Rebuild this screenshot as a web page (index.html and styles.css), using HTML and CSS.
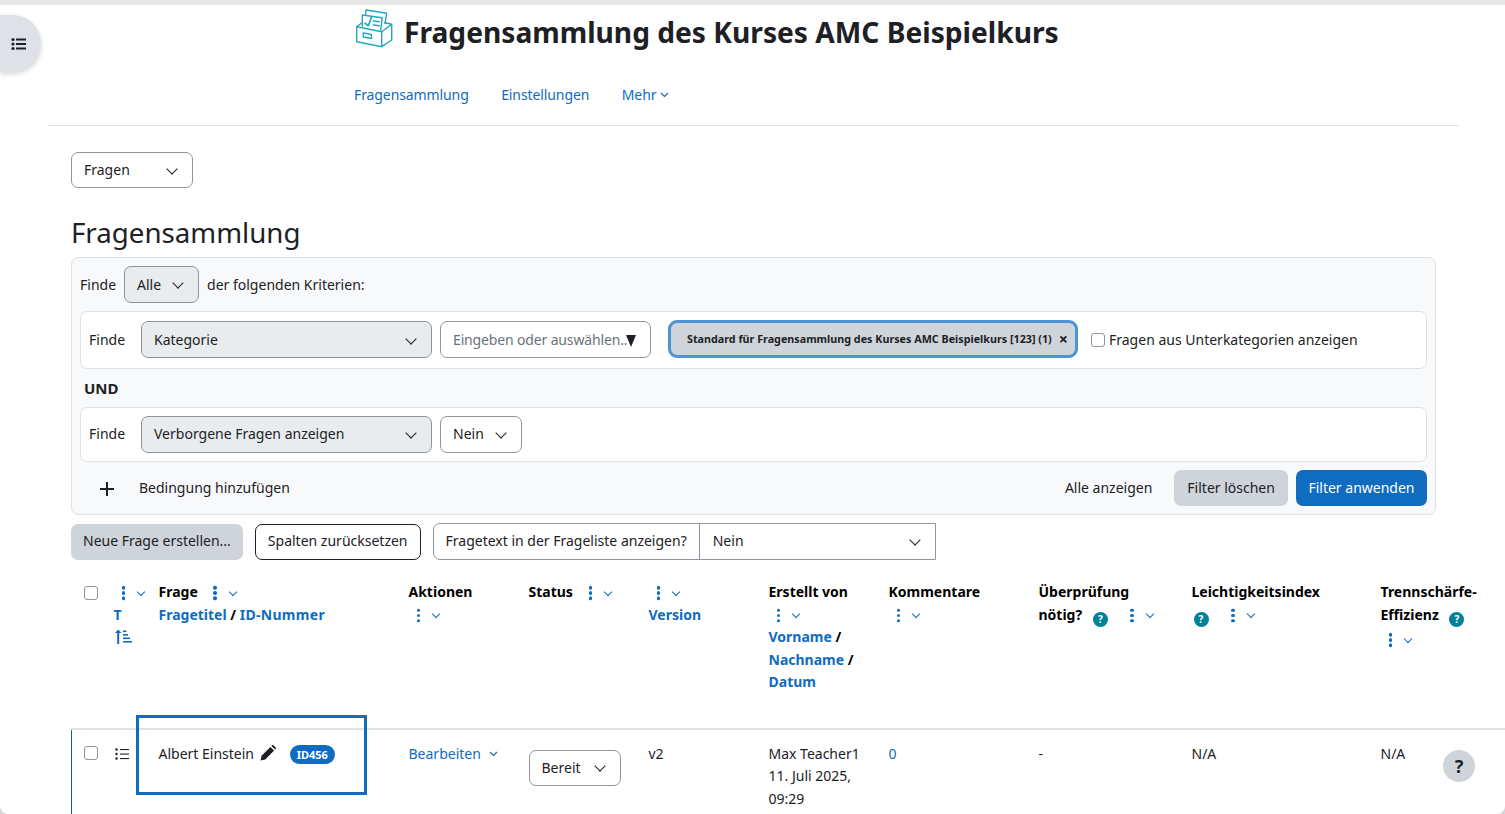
FILE: index.html
```html
<!DOCTYPE html>
<html lang="de">
<head>
<meta charset="utf-8">
<title>Fragensammlung</title>
<link rel="stylesheet" href="styles.css">
</head>
<body>
<button class="drawer-toggle" aria-label="Index">
  <svg width="16" height="14" viewBox="0 0 16 14"><g fill="#1d2125"><circle cx="2" cy="2.5" r="1.6"/><circle cx="2" cy="7" r="1.6"/><circle cx="2" cy="11.5" r="1.6"/><rect x="5" y="1.5" width="10" height="2"/><rect x="5" y="6" width="10" height="2"/><rect x="5" y="10.5" width="10" height="2"/></g></svg>
</button>
<header class="page-head">
  <div class="title-row">
    <svg class="title-icon" width="37" height="40" viewBox="0 0 37 40" fill="none" stroke="#22a8b8" stroke-width="1.4" stroke-linejoin="round" stroke-linecap="round">
      <path d="M9.7 5.5 L10 1 L30.7 4.3 L29 14.3"/>
      <path d="M6.3 17 V6 L26.3 8.7 L24.7 21"/>
      <path d="M9 14.3 L12.3 16.7 L15.7 7.7" stroke-width="1.7"/>
      <path d="M17.3 12 L23.3 12.7 M17.3 16 L23.3 16.7"/>
      <path d="M6.3 13.5 L0.7 17.7 L25.7 22.7 L35.7 15.3 L29 13.8 M0.7 17.7 V32.7 L25.7 37.7 L35.7 31 V15.3 M25.7 22.7 V37.7"/>
      <path d="M7.3 24 L15.5 25.5 V29.5 L7.3 28 Z"/>
    </svg>
    <h1>Fragensammlung des Kurses AMC Beispielkurs</h1>
  </div>
  <nav class="tabs">
    <a href="#">Fragensammlung</a>
    <a href="#">Einstellungen</a>
    <a href="#">Mehr <svg class="chev-s" width="9" height="6" viewBox="0 0 9 6"><path d="M1 1 L4.5 4.5 L8 1" fill="none" stroke="currentColor" stroke-width="1.2"/></svg></a>
  </nav>
</header>
<hr class="rule">
<main class="content">
  <div class="select plain w-fragen">Fragen <span class="caret"></span></div>
  <h2>Fragensammlung</h2>
  <section class="filter">
    <div class="filter-top">
      <span class="nudge">Finde</span>
      <div class="select grey w-alle">Alle <span class="caret"></span></div>
      <span class="nudge">der folgenden Kriterien:</span>
    </div>
    <div class="cond c1">
      <span class="finde">Finde</span>
      <div class="select grey w-cond">Kategorie <span class="caret"></span></div>
      <div class="select plain w-input"><span class="ph">Eingeben oder auswählen..</span><span class="tri"></span></div>
      <div class="tag"><span>Standard für Fragensammlung des Kurses AMC Beispielkurs [123] (1)</span><b>×</b></div>
      <span class="box"></span><span class="sub">Fragen aus Unterkategorien anzeigen</span>
    </div>
    <div class="und">UND</div>
    <div class="cond c2">
      <span class="finde">Finde</span>
      <div class="select grey w-cond">Verborgene Fragen anzeigen <span class="caret"></span></div>
      <div class="select plain w-nein">Nein <span class="caret"></span></div>
    </div>
    <div class="filter-foot">
      <span class="plus"></span>
      <span class="add nudge">Bedingung hinzufügen</span>
      <span class="all nudge">Alle anzeigen</span>
      <button class="btn grey-btn nudge-btn">Filter löschen</button>
      <button class="btn blue-btn nudge-btn">Filter anwenden</button>
    </div>
  </section>
  <div class="actions">
    <button class="btn grey-btn neue">Neue Frage erstellen...</button>
    <button class="btn outline">Spalten zurücksetzen</button>
    <div class="joined"><span class="lbl">Fragetext in der Frageliste anzeigen?</span><div class="val">Nein <span class="caret"></span></div></div>
  </div>
  <div class="table-wrap">
    <table>
      <colgroup>
        <col class="c-a"><col class="c-b"><col class="c-c"><col class="c-d"><col class="c-d"><col class="c-d"><col class="c-d"><col class="c-e"><col class="c-f"><col class="c-g"><col class="c-h">
      </colgroup>
      <thead>
        <tr>
          <th><span class="box"></span></th>
          <th class="icons"><span class="menu"><i class="dots"></i><i class="chev"></i></span><br><a href="#">T</a><br>
            <a href="#"><svg class="sort" width="18" height="15" viewBox="0 0 18 15" fill="currentColor"><path d="M3.2 15 V4 H1 L4.2 0.5 L7.4 4 H5.2 V15 Z"/><rect x="9" y="1.5" width="3.5" height="1.6"/><rect x="9" y="5" width="5" height="1.6"/><rect x="9" y="8.5" width="7" height="1.6"/><rect x="9" y="12" width="9" height="1.6"/></svg></a></th>
          <th>Frage <span class="menu m-l"><i class="dots"></i><i class="chev"></i></span><br><a href="#">Fragetitel</a> / <a href="#" class="wide">ID-Nummer</a></th>
          <th>Aktionen<br><span class="menu"><i class="dots"></i><i class="chev"></i></span></th>
          <th>Status <span class="menu m-l"><i class="dots"></i><i class="chev"></i></span></th>
          <th><span class="menu"><i class="dots"></i><i class="chev"></i></span><br><a href="#">Version</a></th>
          <th>Erstellt von<br><span class="menu"><i class="dots"></i><i class="chev"></i></span><br><a href="#">Vorname</a> /<br><a href="#">Nachname</a> /<br><a href="#">Datum</a></th>
          <th>Kommentare<br><span class="menu"><i class="dots"></i><i class="chev"></i></span></th>
          <th>Überprüfung<br>nötig? <span class="help">?</span> <span class="menu m-w"><i class="dots"></i><i class="chev"></i></span></th>
          <th>Leichtigkeitsindex<br><span class="help h-first">?</span> <span class="menu m-w"><i class="dots"></i><i class="chev"></i></span></th>
          <th>Trennschärfe-<br>Effizienz <span class="help">?</span><br><span class="menu m-t"><i class="dots"></i><i class="chev"></i></span></th>
        </tr>
      </thead>
      <tbody>
        <tr>
          <td class="rowbar"><span class="box"></span></td>
          <td><svg class="list" width="14" height="12" viewBox="0 0 14 12" fill="#1d2125"><circle cx="1.5" cy="1.5" r="1.2"/><circle cx="1.5" cy="6" r="1.2"/><circle cx="1.5" cy="10.5" r="1.2"/><rect x="5" y="1" width="9" height="1.1"/><rect x="5" y="5.5" width="9" height="1.1"/><rect x="5" y="10" width="9" height="1.1"/></svg></td>
          <td>Albert Einstein <svg class="pen" width="16" height="16" viewBox="0 0 16 16"><path fill="#1d2125" d="M0.5 15.5 L1.6 10.7 L10.4 1.9 L14.1 5.6 L5.3 14.4 Z M11.4 0.9 L12.2 0.3 Q13 -0.2 13.8 0.5 L15.5 2.2 Q16.2 3 15.7 3.8 L15.1 4.6 Z"/></svg><span class="badge">ID456</span></td>
          <td><a href="#" class="normal">Bearbeiten <svg class="chev-s m-b" width="9" height="6" viewBox="0 0 9 6"><path d="M1 1 L4.5 4.5 L8 1" fill="none" stroke="currentColor" stroke-width="1.1"/></svg></a></td>
          <td><div class="select plain w-bereit">Bereit <span class="caret"></span></div></td>
          <td>v2</td>
          <td>Max Teacher1<br>11. Juli 2025,<br>09:29</td>
          <td><a href="#" class="normal">0</a></td>
          <td>-</td>
          <td>N/A</td>
          <td>N/A</td>
        </tr>
      </tbody>
    </table>
    <div class="highlight"></div>
  </div>
</main>
<button class="help-fab" aria-label="Hilfe">?</button>
</body>
</html>
```
FILE: styles.css
```css
* { box-sizing: border-box; }
html { margin: 0; height: 814px; overflow: hidden; background: #d6d6da; }
body {
  margin: 0; height: 814px; overflow: hidden;
  font-family: "Noto Sans", "Open Sans", "Liberation Sans", sans-serif;
  font-size: 14px;
  line-height: 22.5px;
  color: #1d2125;
  background: #fff;
  border-top: 5px solid #e9e9ec;
  border-radius: 0 0 8px 8px;
  position: relative;
}
a { color: #0f6cbf; text-decoration: none; }
button { font: inherit; cursor: pointer; }

.drawer-toggle {
  position: absolute; left: 0; top: 10px; width: 41px; height: 57px;
  border: 0; background: #dee2e6; border-radius: 0 28px 28px 0;
  box-shadow: 0 2px 5px rgba(0,0,0,.16); padding: 0 5px 0 0;
}
.drawer-toggle svg { display: block; margin: 0 auto 0 11px; }

.page-head { padding-left: 355px; height: 120px; }
.title-row { display: flex; align-items: center; gap: 11px; height: 56px; padding-bottom: 2px; }
.title-row h1 { margin: 0; font-size: 28.17px; font-weight: 700; line-height: 40px; color: #1d2125; white-space: nowrap; }
.title-icon { flex: none; margin: -6px 0 0 1px; }
.tabs { display: flex; gap: 32.5px; margin: 23px 0 0 -1px; letter-spacing: -.1px; }
.chev-s { vertical-align: 2px; }

.rule { margin: 0 46px 0 48px; border: 0; border-top: 1px solid #dee2e6; }

.content { padding-left: 71px; padding-top: 26px; }
.content h2 { margin: 24px 0 5px; font-size: 27.7px; font-weight: 400; line-height: 40px; }

.select {
  display: inline-flex; align-items: center; justify-content: space-between;
  height: 37px; padding: 1px 14px 0 12px; border-radius: 7px;
  border: 1px solid #8f959e; background: #fff; white-space: nowrap;
}
.select.grey { background: #e9ecef; }
.caret {
  display: inline-block; width: 8px; height: 8px; margin: -4px 2px 0 0;
  border-right: 1.5px solid #1d2125; border-bottom: 1.5px solid #1d2125;
  transform: rotate(45deg);
}
.w-fragen { width: 122px; height: 36px; }
.w-alle { width: 75px; }
.w-cond { width: 291px; }
.w-input { width: 211px; justify-content: flex-start; }
.w-nein { width: 82px; }
.w-bereit { width: 92px; height: 36px; }
.ph { color: #6a737b; letter-spacing: -.15px; }
.tri { width: 0; height: 0; margin: 1px 0 0 -1px; border-left: 5.5px solid transparent; border-right: 5.5px solid transparent; border-top: 12px solid #1d2125; }

.filter {
  width: 1365px; height: 258px; padding: 8px;
  background: #f8f9fa; border: 1px solid #dee2e6; border-radius: 7px;
}
.nudge { padding-top: 2px; }
.filter-top { display: flex; align-items: center; gap: 8px; height: 37px; }
.cond {
  display: flex; align-items: center; background: #fff;
  border: 1px solid #dee2e6; border-radius: 7px; padding-left: 8px;
}
.c1 { height: 58px; margin-top: 8px; padding-bottom: 2px; }
.c1 .finde, .c1 .sub, .c1 .box { margin-top: 2px; }
.c1 .select { padding-top: 3px; }
.c2 { height: 55px; }
.finde { width: 52px; }
.cond .w-input, .cond .w-nein { margin-left: 8px; }
.tag {
  display: flex; align-items: center; justify-content: space-between;
  width: 410px; height: 38px; margin-left: 17px; padding: 1px 7px 0 16px;
  background: #ced4da; border: 3.5px solid #4b93d3; border-radius: 9px;
  font-size: 10.75px; font-weight: 700; white-space: nowrap;
}
.tag b { font-size: 16px; font-weight: 700; }
.box {
  display: inline-block; width: 14px; height: 14px; flex: none;
  border: 1px solid #8f959e; border-radius: 3px; background: #fff;
}
.cond .box { margin-left: 13px; }
.sub { margin-left: 4px; }
.und { font-weight: 700; margin: 8px 0 7px 4px; font-size: 15px; }
.filter-foot { display: flex; align-items: center; height: 36px; margin-top: 8px; }
.plus { flex: none; width: 14px; height: 14px; margin: 2px 0 0 20px; background: linear-gradient(#1d2125,#1d2125) center/100% 2px no-repeat, linear-gradient(#1d2125,#1d2125) center/2px 100% no-repeat; }
.add { margin-left: 25px; flex: 1; }
.all { margin-right: 22px; }
.btn { height: 36px; padding: 0 12px; border-radius: 7px; border: 1px solid transparent; white-space: nowrap; }
.nudge-btn { padding-top: 2px; }
.grey-btn { background: #ced4da; color: #1d2125; }
.blue-btn { background: #0f6cbf; color: #fff; margin-left: 8px; padding-left: 11.5px; padding-right: 11.5px; }
.neue { padding: 0 11px; }
.outline { background: #fff; border-color: #1d2125; color: #1d2125; }

.actions { display: flex; align-items: center; gap: 12px; margin-top: 8px; }
.joined { display: flex; height: 37px; border: 1px solid #8f959e; border-radius: 7px 0 0 7px; }
.lbl { padding: 6px 12px 0 12px; border-right: 1px solid #8f959e; white-space: nowrap; }
.val { width: 235px; padding: 0 14px 0 13px; display: flex; align-items: center; justify-content: space-between; }

.table-wrap { position: relative; margin-top: 11px; width: 1479px; }
table { border-collapse: collapse; table-layout: fixed; width: 1479px; }
.c-a { width: 30px; } .c-b { width: 45px; } .c-c { width: 250px; } .c-d { width: 120px; }
.c-e { width: 150px; } .c-f { width: 153px; } .c-g { width: 189px; } .c-h { width: 182px; }
th, td { text-align: left; vertical-align: top; padding: 0 12px; }
th { font-weight: 700; height: 158px; padding-top: 10px; color: #000; border-bottom: 2px solid #dee2e6; }
th a { color: #0f6cbf; }
.wide { letter-spacing: .3px; }
td { padding-top: 12.5px; height: 90px; }
th:first-child, td:first-child { padding: 0 0 0 12px; }
th:first-child { padding-top: 13px; }
td:first-child { padding-top: 14px; border-left: 1px solid #0f6c7a; }
.normal { font-weight: 400; }
.menu { display: inline-flex; align-items: center; gap: 13px; height: 14px; vertical-align: middle; margin-left: 5px; }
.m-l { margin-left: 9px; }
.m-w { margin-left: 16px; }
.m-t { margin-top: 3px; }
.dots { display: block; width: 3.4px; height: 3.4px; border-radius: 50%; background: #0f6cbf; box-shadow: 0 -5.3px 0 #0f6cbf, 0 5.3px 0 #0f6cbf; margin-left: 3px; }
.chev { display: block; width: 6px; height: 6px; margin: -3px 1px 0 0; border-right: 1.2px solid #0f6cbf; border-bottom: 1.2px solid #0f6cbf; transform: rotate(45deg); }
.icons { padding-left: 12px; padding-right: 0; white-space: nowrap; }
.sort { display: inline-block; vertical-align: -2px; }
.help {
  display: inline-block; width: 15px; height: 15px; margin-left: 7px; vertical-align: -3px;
  border-radius: 50%; background: #008196; color: #fff; font-size: 10px; line-height: 15px; text-align: center; font-weight: 700;
}
.h-first { margin-left: 2px; }
.list { margin: 5px 0 0 1px; display: block; }
.pen { vertical-align: -2px; margin-left: 2px; }
.badge {
  display: inline-block; margin-left: 14px; padding: 0 7px; height: 19px; line-height: 19px;
  background: #0f6cbf; color: #fff; font-size: 11px; font-weight: 700; border-radius: 10px; vertical-align: 0;
}
.m-b { margin-left: 4px; }
td .select { margin-top: 7px; }
.highlight { position: absolute; left: 65px; top: 144px; width: 231px; height: 80px; border: 3px solid #0f6cbf; pointer-events: none; }
.help-fab {
  position: absolute; left: 1443px; top: 745px; width: 32px; height: 32px; padding: 0;
  border: 0; border-radius: 50%; background: #ced4da; color: #1d2125; font-size: 18px; font-weight: 700;
}
```
